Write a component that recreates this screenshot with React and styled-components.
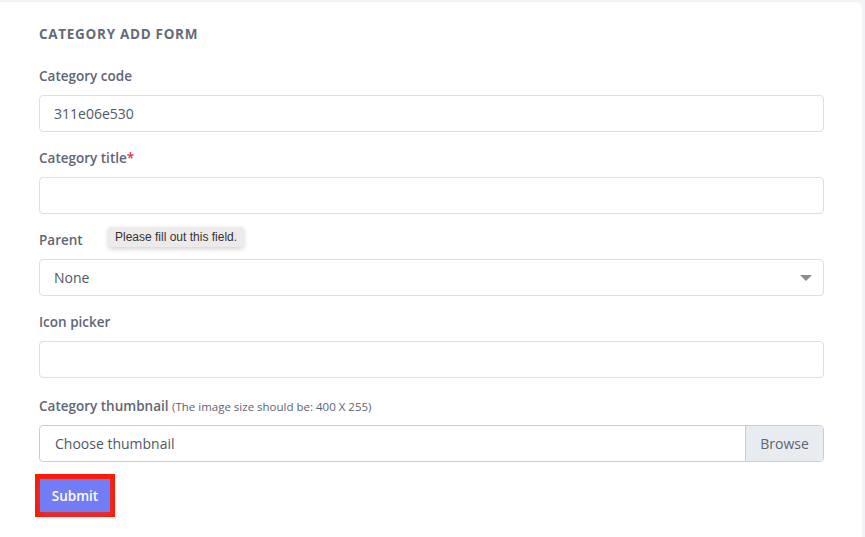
import React from "react";
import styled, { createGlobalStyle } from "styled-components";

const GlobalStyle = createGlobalStyle`
  html, body {
    margin: 0;
    padding: 0;
    background: #f2f3f7;
    font-family: "Open Sans", "Liberation Sans", sans-serif;
  }
  * {
    box-sizing: border-box;
  }
`;

const Styled = {
  Card: styled.div`
    margin: 2px 3px 0 0;
    background: #ffffff;
    border-radius: 0 6px 0 0;
    padding: 22px 38px 40px 39px;
    min-height: 535px;
  `,
  Heading: styled.div`
    font-size: 13.5px;
    font-weight: 700;
    line-height: 20px;
    letter-spacing: 0.7px;
    text-transform: uppercase;
    color: #646b78;
    margin-bottom: 22px;
  `,
  Group: styled.div`
    position: relative;
    margin-bottom: ${(p) => (p.$last ? 0 : 16)}px;
    padding-top: ${(p) => (p.$last ? 2 : 0)}px;
  `,
  Label: styled.label`
    display: block;
    font-size: 13.5px;
    font-weight: 600;
    line-height: 20px;
    color: #5f6674;
    margin-bottom: ${(p) => p.$gap || 9}px;
  `,
  Required: styled.span`
    color: #e8333a;
  `,
  Hint: styled.span`
    font-size: 11.5px;
    font-weight: 400;
    color: #5d6472;
  `,
  Input: styled.div`
    height: 37px;
    border: 1px solid #dcdfe5;
    border-radius: 4px;
    background: #fff;
    display: flex;
    align-items: center;
    padding: 0 14px;
    font-size: 14px;
    color: #505765;
  `,
  Select: styled.div`
    height: 37px;
    border: 1px solid #dcdfe5;
    border-radius: 4px;
    display: flex;
    align-items: center;
    justify-content: space-between;
    padding: 0 11px 0 14px;
    font-size: 14px;
    color: #505765;
  `,
  Caret: styled.span`
    width: 0;
    height: 0;
    border-left: 6px solid transparent;
    border-right: 6px solid transparent;
    border-top: 6px solid #868e99;
  `,
  FileInput: styled.div`
    height: 37px;
    border: 1px solid #c8ced6;
    border-radius: 4px;
    display: flex;
    overflow: hidden;
    font-size: 14px;
  `,
  FileName: styled.div`
    flex: 1;
    display: flex;
    align-items: center;
    padding: 0 15px;
    color: #505765;
  `,
  Browse: styled.div`
    width: 78px;
    display: flex;
    align-items: center;
    justify-content: center;
    background: #e8ebef;
    border-left: 1px solid #c8ced6;
    color: #5d6472;
  `,
  Tooltip: styled.div`
    position: absolute;
    left: 69px;
    top: -3px;
    padding: 3px 7px;
    background: #efeaea;
    border-radius: 3px;
    box-shadow: 0 2px 5px rgba(0, 0, 0, 0.18);
    font-family: "Liberation Sans", sans-serif;
    font-size: 12px;
    line-height: 14px;
    color: #333;
    white-space: nowrap;
  `,
  SubmitWrap: styled.div`
    display: inline-block;
    margin: 12px 0 0 -4px;
    border: 5px solid #ff1a00;
  `,
  Submit: styled.button`
    display: block;
    width: 70px;
    height: 33px;
    border: none;
    background: #727cf5;
    color: #fff;
    font-family: inherit;
    font-size: 13.5px;
    font-weight: 600;
    box-shadow: 0 2px 6px rgba(114, 124, 245, 0.4);
    cursor: pointer;
  `,
};

const App = () => {
  const {
    Card, Heading, Group, Label, Required, Hint, Input, Select, Caret,
    FileInput, FileName, Browse, Tooltip, SubmitWrap, Submit,
  } = Styled;

  return (
    <>
      <GlobalStyle />
      <Card>
        <Heading>Category Add Form</Heading>

        <Group>
          <Label>Category code</Label>
          <Input>311e06e530</Input>
        </Group>

        <Group>
          <Label>
            Category title<Required>*</Required>
          </Label>
          <Input />
        </Group>

        <Group>
          <Label>Parent</Label>
          <Tooltip>Please fill out this field.</Tooltip>
          <Select>
            <span>None</span>
            <Caret />
          </Select>
        </Group>

        <Group>
          <Label>Icon picker</Label>
          <Input />
        </Group>

        <Group $last>
          <Label $gap={8}>
            Category thumbnail <Hint>(The image size should be: 400 X 255)</Hint>
          </Label>
          <FileInput>
            <FileName>Choose thumbnail</FileName>
            <Browse>Browse</Browse>
          </FileInput>
        </Group>

        <SubmitWrap>
          <Submit type="submit">Submit</Submit>
        </SubmitWrap>
      </Card>
    </>
  );
};

export default App;
